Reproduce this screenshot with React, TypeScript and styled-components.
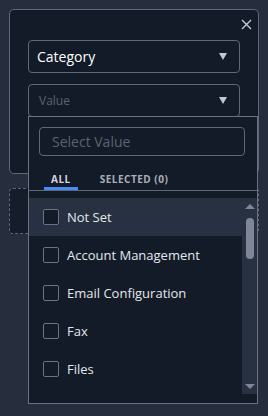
import React from "react";
import styled, { createGlobalStyle } from "styled-components";

const GlobalStyle = createGlobalStyle`
  html, body { margin: 0; padding: 0; }
  body {
    background: #262e3e;
    font-family: "Open Sans", "Noto Sans", sans-serif;
    width: 268px;
    height: 416px;
    overflow: hidden;
  }
`;

const Page = styled.div`
  position: relative;
  padding: 9px;
  height: 416px;
  box-sizing: border-box;
`;

const Panel = styled.div`
  position: relative;
  box-sizing: border-box;
  width: 250px;
  height: 165px;
  background: #141b28;
  border: 1px solid #5f6779;
  border-radius: 5px;
  padding: 30px 0 0 18px;
  display: flex;
  flex-direction: column;
  gap: 11px;
`;

const CloseButton = styled.button`
  position: absolute;
  top: 8px;
  right: 6px;
  width: 12px;
  height: 12px;
  padding: 0;
  border: none;
  background: transparent;
  display: flex;
  align-items: center;
  justify-content: center;
`;

const Select = styled.div<{ $placeholder?: boolean }>`
  box-sizing: border-box;
  width: 212px;
  height: 33px;
  border: 1px solid #5f6779;
  border-radius: 4px;
  display: flex;
  align-items: center;
  justify-content: space-between;
  padding: 0 12px 0 ${(p) => (p.$placeholder ? "10px" : "8px")};
  color: ${(p) => (p.$placeholder ? "#5b6274" : "#ffffff")};
  font-size: ${(p) => (p.$placeholder ? "12px" : "14px")};
`;

const Caret = styled.span`
  width: 0;
  height: 0;
  border-left: 4.5px solid transparent;
  border-right: 4.5px solid transparent;
  border-top: 7px solid #c3c7cf;
`;

const DashedBox = styled.div`
  box-sizing: border-box;
  width: 250px;
  height: 46px;
  margin-top: 14px;
  border: 1px dashed #5f6779;
  border-radius: 4px;
  background: #161d2a;
`;

const Dropdown = styled.div`
  position: absolute;
  left: 28px;
  top: 116px;
  box-sizing: border-box;
  width: 230px;
  height: 288px;
  background: #141b28;
  border: 1px solid #6a7284;
  display: flex;
  flex-direction: column;
`;

const Search = styled.div`
  box-sizing: border-box;
  margin: 10px 0 0 10px;
  width: 206px;
  height: 29px;
  border: 1px solid #5f6779;
  border-radius: 4px;
  display: flex;
  align-items: center;
  padding-left: 12px;
  color: #5b6274;
  font-size: 14px;
`;

const Tabs = styled.div`
  display: flex;
  gap: 15px;
  padding-left: 15px;
  margin-top: 17px;
  border-bottom: 1px solid #5f6779;
`;

const Tab = styled.div<{ $active?: boolean }>`
  padding: 0 7px;
  height: 14px;
  font-size: 10px;
  font-weight: 700;
  letter-spacing: 0.5px;
  line-height: 12px;
  color: ${(p) => (p.$active ? "#d3d7de" : "#a9afbb")};
  border-bottom: 3px solid ${(p) => (p.$active ? "#4a8cf2" : "transparent")};
  box-sizing: content-box;
  display: flex;
  align-items: flex-start;
`;

const ListArea = styled.div`
  flex: 1;
  padding: 7px 0 9px 0;
  display: flex;
  min-height: 0;
`;

const List = styled.div`
  flex: 1;
  overflow: hidden;
  display: flex;
  flex-direction: column;
`;

const Row = styled.div<{ $hover?: boolean }>`
  flex: 0 0 38px;
  display: flex;
  align-items: center;
  gap: 8px;
  padding-left: 14px;
  background: ${(p) => (p.$hover ? "#283142" : "transparent")};
  color: #e4e7ec;
  font-size: 13px;
`;

const Checkbox = styled.span`
  box-sizing: border-box;
  width: 16px;
  height: 16px;
  border: 1px solid #6b7283;
  border-radius: 2px;
  background: #141b28;
`;

const ScrollTrack = styled.div`
  width: 15px;
  background: #283142;
  display: flex;
  flex-direction: column;
  align-items: center;
  padding-top: 6px;
  padding-bottom: 5px;
  box-sizing: border-box;
`;

const ArrowUp = styled.span`
  width: 0;
  height: 0;
  border-left: 5px solid transparent;
  border-right: 5px solid transparent;
  border-bottom: 5px solid #7f869a;
`;

const ArrowDown = styled.span`
  width: 0;
  height: 0;
  border-left: 5px solid transparent;
  border-right: 5px solid transparent;
  border-top: 5px solid #7f869a;
  margin-top: auto;
`;

const Thumb = styled.span`
  width: 8px;
  height: 41px;
  margin-top: 9px;
  border-radius: 4px;
  background: #7f869a;
`;

const items = ["Not Set", "Account Management", "Email Configuration", "Fax", "Files"];

export default function App() {
  return (
    <>
      <GlobalStyle />
      <Page>
        <Panel>
          <CloseButton aria-label="close">
            <svg width="11" height="11" viewBox="0 0 11 11">
              <path d="M1 1L10 10M10 1L1 10" stroke="#c6cad2" strokeWidth="1.4" />
            </svg>
          </CloseButton>
          <Select>
            <span>Category</span>
            <Caret />
          </Select>
          <Select $placeholder>
            <span>Value</span>
            <Caret />
          </Select>
        </Panel>
        <DashedBox />
        <Dropdown>
          <Search>Select Value</Search>
          <Tabs>
            <Tab $active>ALL</Tab>
            <Tab>SELECTED (0)</Tab>
          </Tabs>
          <ListArea>
            <List>
              {items.map((it, i) => (
                <Row key={it} $hover={i === 0}>
                  <Checkbox />
                  <span>{it}</span>
                </Row>
              ))}
            </List>
            <ScrollTrack>
              <ArrowUp />
              <Thumb />
              <ArrowDown />
            </ScrollTrack>
          </ListArea>
        </Dropdown>
      </Page>
    </>
  );
}
